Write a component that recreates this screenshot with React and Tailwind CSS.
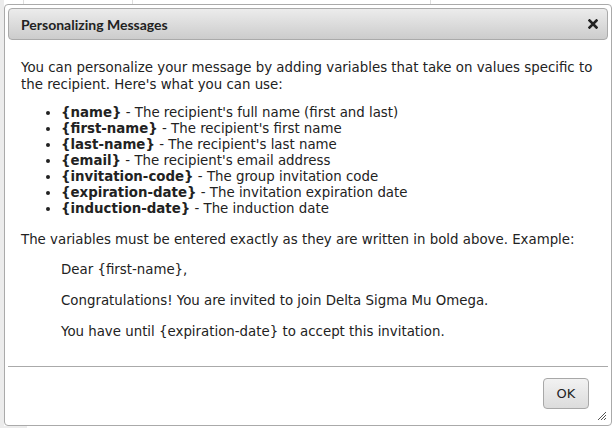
import React from "react";

const vars = [
  ["{name}", "The recipient's full name (first and last)"],
  ["{first-name}", "The recipient's first name"],
  ["{last-name}", "The recipient's last name"],
  ["{email}", "The recipient's email address"],
  ["{invitation-code}", "The group invitation code"],
  ["{expiration-date}", "The invitation expiration date"],
  ["{induction-date}", "The induction date"],
];

export default function App() {
  return (
    <div className="relative w-[613px] h-[428px] bg-white overflow-hidden" style={{ fontFamily: "'DejaVu Sans', Verdana, sans-serif" }}>
      {/* page behind the dialog */}
      <div className="absolute left-0 top-0 w-[4px] h-full bg-[#ececec]" />
      <div className="absolute left-0 top-[426px] w-[27px] h-[2px] bg-[#ececec]" />
      <div className="absolute left-[23px] top-0 w-px h-[4px] bg-[#ddd]" />
      <div className="absolute left-[132px] top-0 w-px h-[4px] bg-[#ddd]" />
      <div className="absolute left-[430px] top-0 w-px h-[4px] bg-[#ddd]" />

      <div className="absolute left-[4px] top-[4px] w-[608px] h-[422px] flex flex-col bg-white border border-[#aaaaaa] rounded-[4px] p-[3px]">
        <div className="flex items-center justify-between h-[32px] pl-[12px] pr-[9px] rounded-[4px] border border-[#aaaaaa] bg-gradient-to-b from-[#ececec] to-[#cccccc]">
          <span className="text-[14px] font-bold text-[#222]" style={{ fontFamily: "Lato, sans-serif" }}>
            Personalizing Messages
          </span>
          <svg width="10" height="10" viewBox="0 0 10 10">
            <path d="M1.5 1.5 L8.5 8.5 M8.5 1.5 L1.5 8.5" stroke="#222" strokeWidth="2.6" strokeLinecap="square" />
          </svg>
        </div>

        <div className="flex-1 px-[13px] pt-[19px] text-[13.35px] leading-[16px] text-[#222]">
          <p className="leading-[17px]">
            You can personalize your message by adding variables that take on values specific to the recipient. Here's what you can use:
          </p>
          <ul className="mt-[12px] ml-[40px] list-disc">
            {vars.map(([k, d]) => (
              <li key={k}>
                <b>{k}</b> - {d}
              </li>
            ))}
          </ul>
          <p className="mt-[15px]">The variables must be entered exactly as they are written in bold above. Example:</p>
          <div className="ml-[40px] mt-[14px] flex flex-col gap-[15px]">
            <p>Dear {"{first-name}"},</p>
            <p>Congratulations! You are invited to join Delta Sigma Mu Omega.</p>
            <p>You have until {"{expiration-date}"} to accept this invitation.</p>
          </div>
        </div>

        <div className="relative h-[56px] border-t border-[#aaaaaa] flex items-start justify-end pt-[11px] pr-[19px]">
          <button className="w-[46px] h-[31px] rounded-[4px] border border-[#a8a8a8] bg-gradient-to-b from-[#f2f2f2] to-[#dcdcdc] text-[13px] text-[#222]">
            OK
          </button>
          <svg width="10" height="10" viewBox="0 0 10 10" className="absolute right-[1px] bottom-[1px]">
            <path d="M9 1 L1 9 M9 4 L4 9 M9 7 L7 9" stroke="#555" strokeWidth="1" />
          </svg>
        </div>
      </div>
    </div>
  );
}
